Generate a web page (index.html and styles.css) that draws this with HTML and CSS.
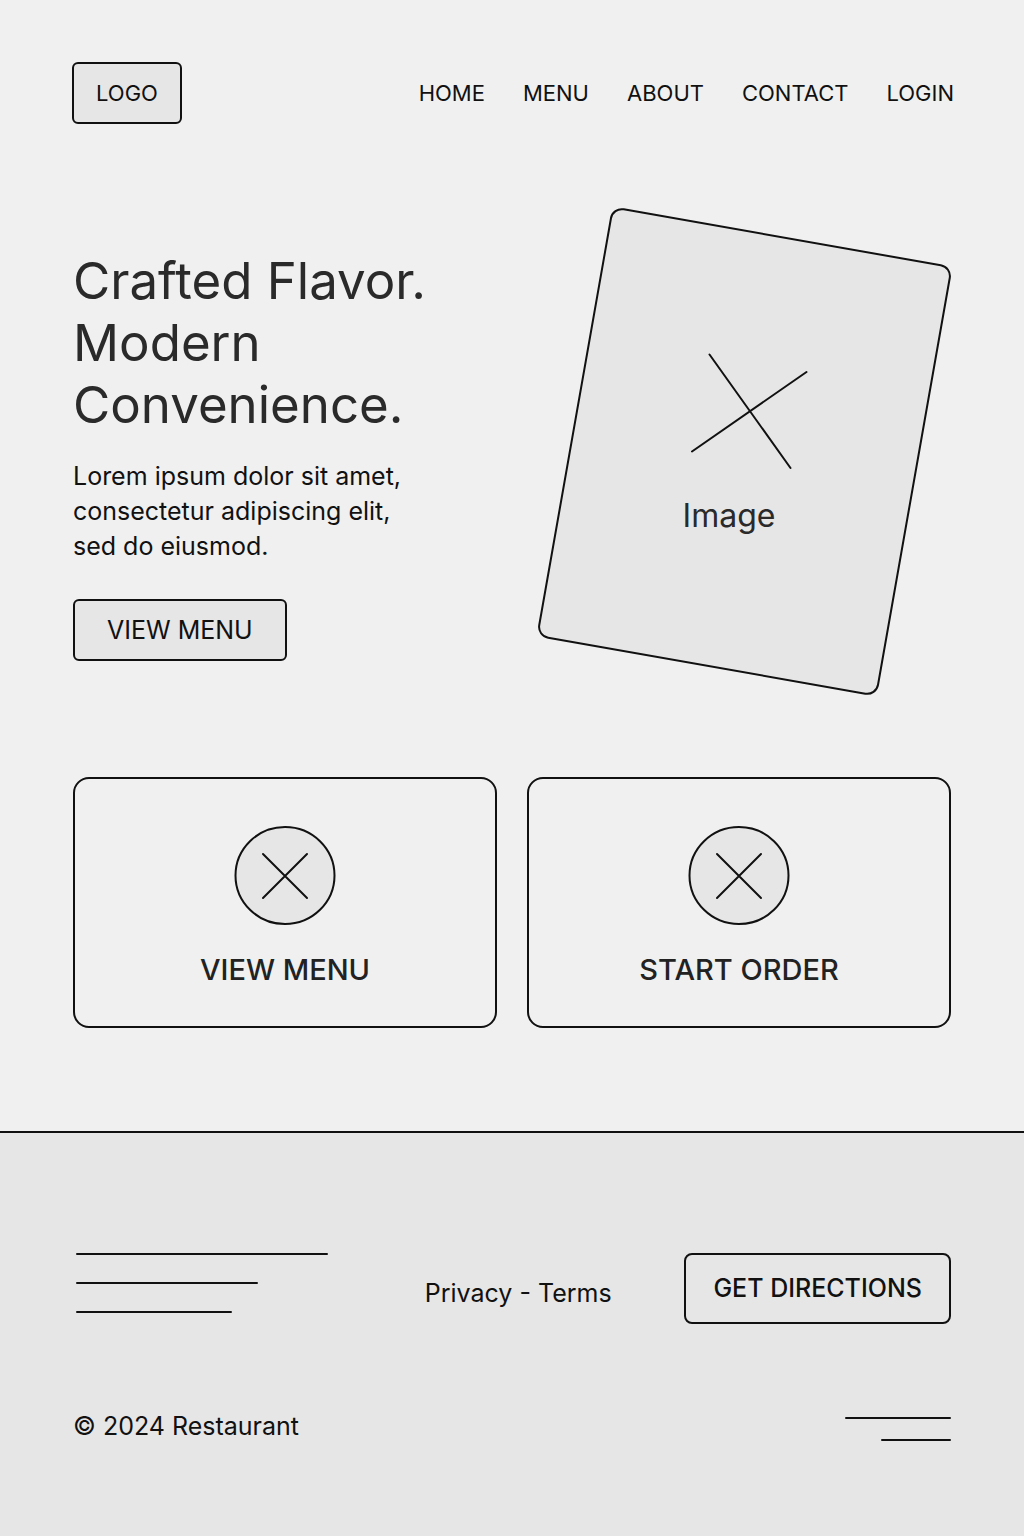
FILE: index.html
```html
<!DOCTYPE html>
<html lang="en">
<head>
<meta charset="utf-8">
<meta name="viewport" content="width=device-width, initial-scale=1">
<title>Restaurant</title>
<link rel="stylesheet" href="styles.css">
</head>
<body>
<header class="header">
  <a class="logo" href="#">LOGO</a>
  <nav class="nav">
    <a href="#">HOME</a>
    <a href="#">MENU</a>
    <a href="#">ABOUT</a>
    <a href="#">CONTACT</a>
    <a href="#">LOGIN</a>
  </nav>
</header>
<main class="main">
  <section class="hero">
    <div class="intro">
      <h1 class="title">Crafted Flavor.<br>Modern<br>Convenience.</h1>
      <p class="lead">Lorem ipsum dolor sit amet,<br>consectetur adipiscing elit,<br>sed do eiusmod.</p>
      <button class="button" type="button">VIEW MENU</button>
    </div>
    <figure class="picture">
      <svg class="frame" viewBox="0 0 416 490" aria-hidden="true">
        <rect x="37.5" y="28" width="344" height="435" rx="11" transform="rotate(10 209.5 245.5)"/>
        <path d="M174.5 148.5 255.5 262M271.5 166 157 245.5"/>
      </svg>
      <figcaption class="caption">Image</figcaption>
    </figure>
  </section>
  <section class="cards">
    <a class="card" href="#">
      <svg class="icon" viewBox="0 0 102 100" aria-hidden="true"><ellipse cx="51" cy="49.5" rx="49.5" ry="48.5"/><path d="M29 28 73 72M73 28 29 72"/></svg>
      <span>VIEW MENU</span>
    </a>
    <a class="card" href="#">
      <svg class="icon" viewBox="0 0 102 100" aria-hidden="true"><ellipse cx="51" cy="49.5" rx="49.5" ry="48.5"/><path d="M29 28 73 72M73 28 29 72"/></svg>
      <span>START ORDER</span>
    </a>
  </section>
</main>
<footer class="footer">
  <div class="row">
    <div class="lines"><span class="line long"></span><span class="line medium"></span><span class="line short"></span></div>
    <p class="legal"><a href="#">Privacy</a> - <a href="#">Terms</a></p>
    <button class="button directions" type="button">GET DIRECTIONS</button>
  </div>
  <div class="row bottom">
    <p class="copyright">© 2024 Restaurant</p>
    <div class="lines end"><span class="line wide"></span><span class="line narrow"></span></div>
  </div>
</footer>
</body>
</html>
```
FILE: styles.css
```css
* { box-sizing: border-box; }

body {
  margin: 0;
  min-height: 100vh;
  display: flex;
  flex-direction: column;
  background: #f0f0f0;
  color: #111;
  font-family: Inter, "Liberation Sans", sans-serif;
  font-size: 25px;
  line-height: 30px;
}

a { color: inherit; text-decoration: none; }
h1, p, figure { margin: 0; }

.header {
  display: flex;
  align-items: center;
  justify-content: space-between;
  padding: 62px 70px 0 72px;
}

.logo {
  padding: 14px 22px;
  border: 2px solid #111;
  border-radius: 6px;
  background: #e6e6e6;
  font-size: 22px;
}

.nav {
  display: flex;
  gap: 38px;
  font-size: 22px;
}

.main { padding: 82px 73px 0; }

.hero {
  display: flex;
  justify-content: space-between;
  align-items: flex-start;
}

.intro { padding-top: 44px; }

.title {
  color: #2a2a2a;
  font-size: 51px;
  font-weight: 400;
  line-height: 62px;
}

.lead {
  margin: 23px 0 35px;
  line-height: 35px;
}

.button {
  padding: 14px 32px;
  border: 2px solid #111;
  border-radius: 6px;
  background: #e6e6e6;
  color: inherit;
  font: inherit;
}

.picture {
  display: grid;
  width: 416px;
}

.frame, .caption { grid-area: 1 / 1; }

.frame, .icon {
  fill: #e6e6e6;
  stroke: #111;
  stroke-width: 2;
  stroke-linecap: round;
}

.caption {
  align-self: start;
  padding: 290px 28px 0 0;
  color: #2a2a2a;
  font-size: 32px;
  line-height: 40px;
  text-align: center;
}

.cards {
  display: grid;
  grid-template-columns: 1fr 1fr;
  gap: 30px;
  margin-top: 81px;
}

.card {
  display: flex;
  flex-direction: column;
  align-items: center;
  gap: 24px;
  padding: 47px 20px 36px;
  border: 2px solid #111;
  border-radius: 16px;
  color: #222;
  font-size: 29px;
  font-weight: 500;
  line-height: 40px;
}

.icon { width: 102px; }

.footer {
  flex: 1;
  margin-top: 103px;
  padding: 120px 73px 80px;
  border-top: 2px solid #111;
  background: #e6e6e6;
}

.row {
  display: flex;
  align-items: flex-start;
  justify-content: space-between;
}

.lines { display: grid; gap: 27px; padding-left: 3px; }
.line { height: 2px; border-radius: 1px; background: #111; }
.long { width: 252px; }
.medium { width: 182px; }
.short { width: 156px; }

.legal { align-self: center; padding: 8px 0 0 24px; }
.directions { padding: 18px 27px; border-radius: 8px; font-weight: 500; line-height: 31px; }

.bottom { align-items: flex-end; margin-top: 87px; }
.end { gap: 20px; justify-items: end; }
.wide { width: 106px; }
.narrow { width: 70px; }
```
